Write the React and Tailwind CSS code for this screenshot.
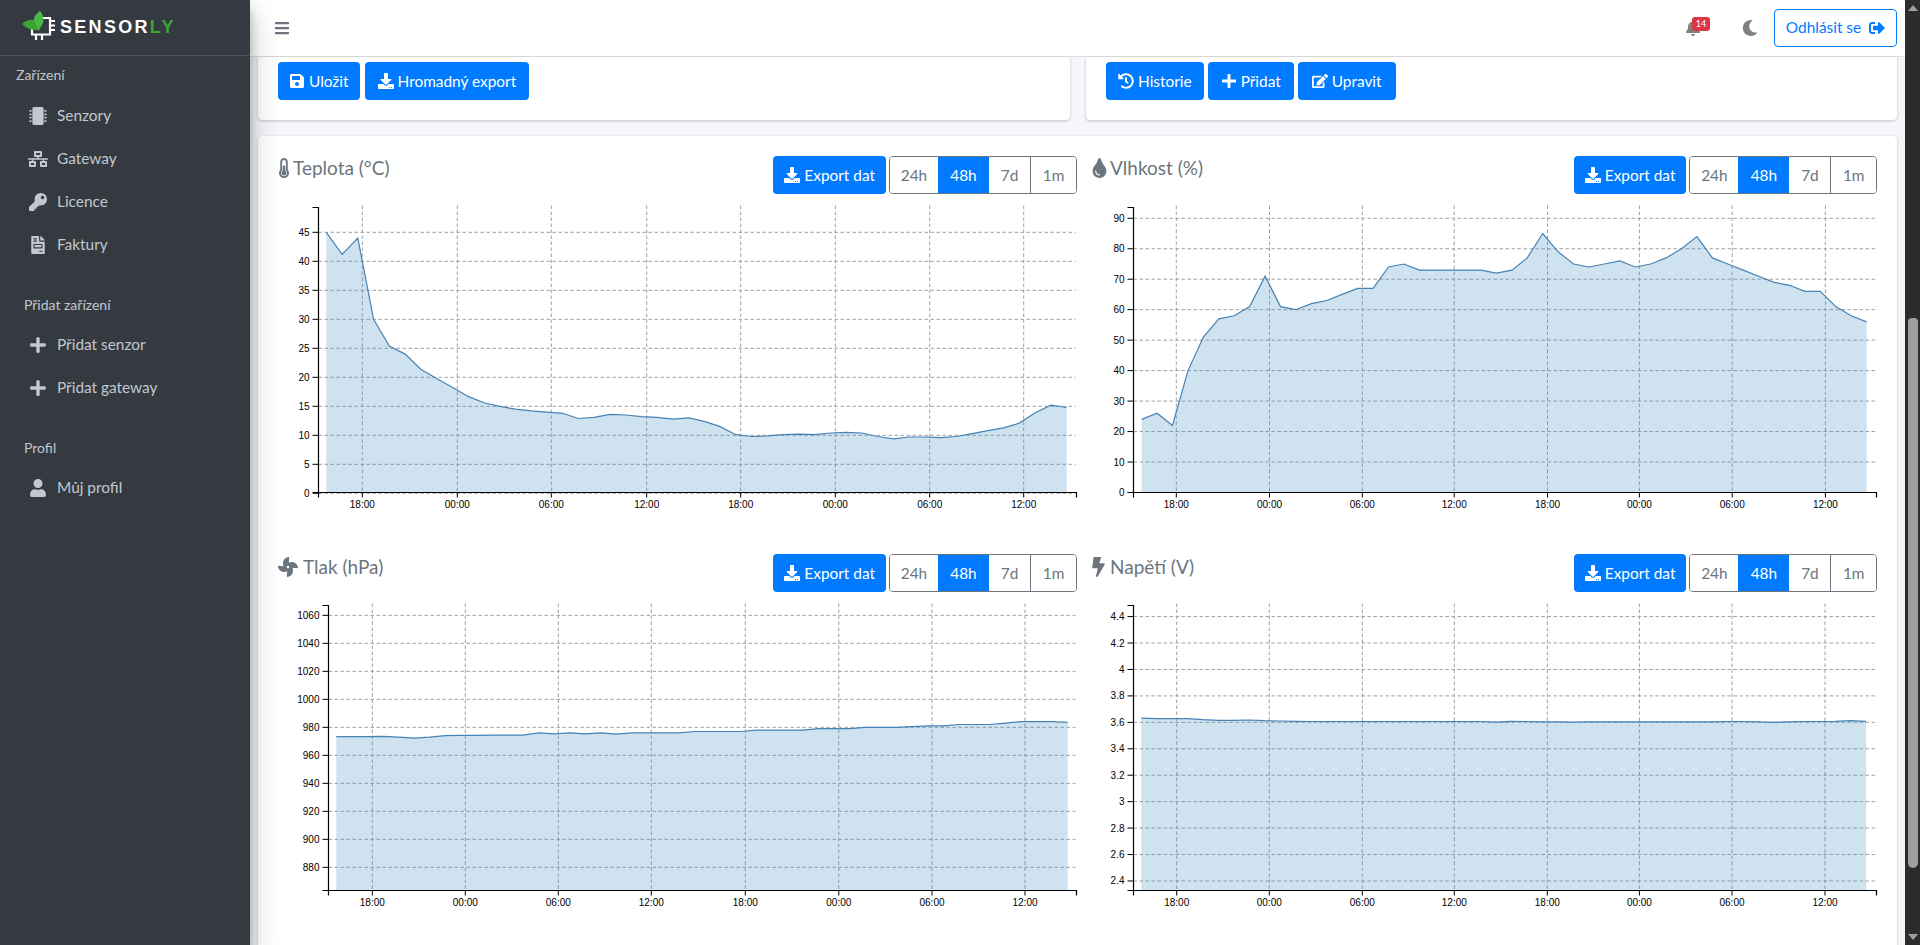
import React from "react";
import {
  FaMicrochip, FaNetworkWired, FaKey, FaFileInvoice, FaPlus, FaUser, FaSave, FaDownload,
  FaHistory, FaEdit, FaBell, FaMoon, FaSignOutAlt, FaBars, FaThermometerHalf, FaTint, FaFan, FaBolt,
} from "react-icons/fa";

const uiFont = "font-['Lato','Noto_Sans',sans-serif]";

const teplota = [45,41.2,44,30,25.4,24,21.4,19.8,18.3,16.7,15.6,15,14.5,14.2,14,13.8,12.9,13.1,13.6,13.5,13.2,13.1,12.8,13,12.4,11.5,10.1,9.8,9.9,10.1,10.2,10.1,10.4,10.5,10.4,9.8,9.4,9.7,9.7,9.6,9.8,10.3,10.8,11.3,12.1,13.9,15.2,14.8];
const vlhkost = [24,26,22,40,51,57,58,61,71,61,60,62,63,65,67,67,74,75,73,73,73,73,73,72,73,77,85,79,75,74,75,76,74,75,77,80,84,77,75,73,71,69,68,66,66,61,58,56];
const tlak = [973.3,973.3,973.3,973.5,973,972.3,973,974,974.3,974.3,974.4,974.4,974.4,976,975.3,976,975.3,976,975.2,976,976,976,976,977,977,977,977,978,978,978,978,979,979,979,980,980,980,980.5,981,981,982,982,982,983,984,984,984,983.5];
const napeti = [3.632,3.628,3.628,3.628,3.62,3.615,3.615,3.618,3.612,3.61,3.608,3.606,3.606,3.606,3.606,3.606,3.606,3.606,3.606,3.606,3.606,3.606,3.606,3.602,3.608,3.606,3.604,3.603,3.602,3.604,3.604,3.604,3.604,3.604,3.604,3.604,3.604,3.604,3.606,3.606,3.604,3.6,3.604,3.606,3.606,3.608,3.612,3.608];

const xLabels = ["18:00", "00:00", "06:00", "12:00", "18:00", "00:00", "06:00", "12:00"];

function ticks(list) {
  return list.map((v) => ({ label: String(v), v }));
}

function Chart({ cellW, axisX, endX, xTicks, start, end, yTicks, yOf, data }) {
  const top = 9.5;
  const bottom = 294.5;
  const step = (end - start) / (data.length - 1);
  const pts = data.map((v, i) => `${(start + i * step).toFixed(1)},${yOf(v).toFixed(1)}`);
  const line = pts.join(" ");
  const area = `${start},${bottom} ${line} ${end},${bottom}`;
  return (
    <svg width={cellW} height={320} viewBox={`0 0 ${cellW} 320`} className="block mt-1 overflow-visible">
      {yTicks.map((t) => (
        <line key={t.label} x1={axisX} x2={endX - 1} y1={yOf(t.v)} y2={yOf(t.v)} stroke="#9f9f9f" strokeWidth="1" strokeDasharray="3.5 2.5" />
      ))}
      {xTicks.map((x, i) => (
        <line key={i} x1={x} x2={x} y1={top - 2} y2={bottom} stroke="#9f9f9f" strokeWidth="1" strokeDasharray="3.5 2.5" />
      ))}
      <polygon points={area} fill="#3f8bc3" fillOpacity="0.25" />
      <polyline points={line} fill="none" stroke="#4682b4" strokeWidth="1.2" />
      <path d={`M${axisX - 6},${top} H${axisX} V${bottom} H${axisX - 6}`} fill="none" stroke="#000" strokeWidth="1.2" />
      <path d={`M${axisX},${bottom + 5} V${bottom} H${endX} V${bottom + 5}`} fill="none" stroke="#000" strokeWidth="1.2" />
      {yTicks.map((t) => (
        <g key={t.label}>
          <line x1={axisX - 6} x2={axisX} y1={yOf(t.v)} y2={yOf(t.v)} stroke="#000" strokeWidth="1" />
          <text x={axisX - 9} y={yOf(t.v) + 3.5} textAnchor="end" fontSize="10" fill="#000" fontFamily="'Liberation Sans', sans-serif">{t.label}</text>
        </g>
      ))}
      {xTicks.map((x, i) => (
        <g key={i}>
          <line x1={x} x2={x} y1={bottom} y2={bottom + 5} stroke="#000" strokeWidth="1" />
          <text x={x} y={bottom + 15} textAnchor="middle" fontSize="10" fill="#000" fontFamily="'Liberation Sans', sans-serif">{xLabels[i]}</text>
        </g>
      ))}
    </svg>
  );
}

function Btn({ icon: Icon, children, pad = "px-[11px]" }) {
  return (
    <button className={`flex items-center gap-1 h-[38px] ${pad} rounded-[4px] bg-[#007bff] text-white text-[15.4px] whitespace-nowrap`}>
      <Icon className="text-[16px] shrink-0" />
      <span className="pt-[1px]">{children}</span>
    </button>
  );
}

function RangeGroup({ widths }) {
  const labels = ["24h", "48h", "7d", "1m"];
  return (
    <div className="flex h-[38px] rounded-[4px] border border-[#6c757d] overflow-hidden">
      {labels.map((l, i) => (
        <div
          key={l}
          style={{ width: widths[i] }}
          className={`flex items-center justify-center pt-[1px] text-[15.4px] ${l === "48h" ? "bg-[#007bff] text-white" : "bg-white text-[#6c757d]"} ${l === "1m" ? "border-l border-[#6c757d]" : ""}`}
        >
          {l}
        </div>
      ))}
    </div>
  );
}

function ChartCell({ icon: Icon, iconClass, title, cellW, group, chart, titlePad = "" }) {
  return (
    <div className="h-[398px]">
      <div className="flex justify-between items-start h-[38px]">
        <h4 className={`flex items-center text-[19px] leading-6 text-[#6c757d] ${titlePad}`}>
          <Icon className={iconClass} />
          <span>{title}</span>
        </h4>
        <div className="flex gap-[3px]">
          <Btn icon={FaDownload} pad="px-[11px]">Export dat</Btn>
          <RangeGroup widths={group} />
        </div>
      </div>
      <Chart cellW={cellW} {...chart} />
    </div>
  );
}

function NavHead({ children, className = "" }) {
  return <div className={`text-[14px] leading-5 text-[#c2c7d0] ${className}`}>{children}</div>;
}

function NavItem({ icon: Icon, size = 18, children }) {
  return (
    <div className="flex items-center h-[43px] pl-[28px] text-[15.4px] text-[#c2c7d0]">
      <span className="w-[20px] flex justify-center"><Icon style={{ fontSize: size }} /></span>
      <span className="ml-[9px]">{children}</span>
    </div>
  );
}

function Logo() {
  return (
    <div className="flex items-center h-[56px] border-b border-[#4b545c] pl-[21px]">
      <svg width="36" height="34" viewBox="0 0 36 34" className="shrink-0">
        <g fill="none" stroke="#fff" strokeWidth="2.2">
          <path d="M11 12v11.5h18V7H22" />
          <path d="M29 10h5M29 14.5h5M29 19h5" />
          <path d="M15 24v5M21 24v5" />
        </g>
        <path d="M1 13c5-5 11-5 15-3 3 2 4 6 3 9-7 1-13-1-18-6z" fill="#3aa535" />
        <path d="M13 9c0-4 3-7 6-9 3 3 4 8 3 12-1 3-3 5-5 6-1-3-3-6-4-9z" fill="#4cb848" />
      </svg>
      <span className="ml-[3px] text-[18px] font-bold tracking-[2.3px] text-white font-['Liberation_Sans',sans-serif]">
        SENSOR<span className="text-[#3aa535]">LY</span>
      </span>
    </div>
  );
}

export default function App() {
  const y1 = (v) => 295.3 - v * 5.8;
  const y2 = (v) => 294.5 - (v / 10) * 30.47;
  const y3 = (v) => (982 / 3 + 540 - 596) - (v - 880) * 1.4;
  const y4 = (v) => (547 / 3 + 540 - 596) - (v - 3.6) * 132.2;

  return (
    <div className={`flex h-[945px] overflow-hidden bg-[#f4f6f9] ${uiFont}`}>
      <aside className="relative z-10 w-[250px] shrink-0 bg-[#343a40] shadow-[0_14px_28px_rgba(0,0,0,0.25),0_10px_10px_rgba(0,0,0,0.22)]">
        <Logo />
        <div className="pt-[9px]">
          <NavHead className="pl-4">Zařízení</NavHead>
          <div className="mt-[9px]">
            <NavItem icon={FaMicrochip}>Senzory</NavItem>
            <NavItem icon={FaNetworkWired} size={20}>Gateway</NavItem>
            <NavItem icon={FaKey}>Licence</NavItem>
            <NavItem icon={FaFileInvoice}>Faktury</NavItem>
          </div>
          <NavHead className="pl-6 mt-[29px]">Přidat zařízení</NavHead>
          <div className="mt-[8px]">
            <NavItem icon={FaPlus}>Přidat senzor</NavItem>
            <NavItem icon={FaPlus}>Přidat gateway</NavItem>
          </div>
          <NavHead className="pl-6 mt-[29px]">Profil</NavHead>
          <div className="mt-[8px]">
            <NavItem icon={FaUser}>Můj profil</NavItem>
          </div>
        </div>
      </aside>

      <div className="flex-1 min-w-0 flex flex-col">
        <header className="h-[57px] shrink-0 bg-white border-b border-[#dee2e6] flex items-center pl-[24px] pr-[8px]">
          <FaBars className="text-[16px] text-[#6c757d]" />
          <div className="ml-auto flex items-center">
            <div className="relative mr-[41px]">
              <FaBell className="text-[16px] text-[#808080]" />
              <span className="absolute -top-[3px] left-[7px] h-[14px] w-[18px] rounded-[3px] bg-[#dc3545] text-white text-[9px] leading-[14px] text-center">14</span>
            </div>
            <FaMoon className="text-[16px] text-[#808080] mr-[16px]" />
            <button className="flex items-center gap-2 h-[38px] w-[123px] justify-center rounded-[4px] border border-[#007bff] text-[#007bff] text-[15.4px] bg-white">
              <span>Odhlásit se</span>
              <FaSignOutAlt className="text-[16px]" />
            </button>
          </div>
        </header>

        <main className="flex-1 min-h-0 px-2">
          <div className="grid grid-cols-[812px_811px] gap-[16px]">
            <section className="h-[63px] bg-white rounded-b-[4px] shadow-[0_0_1px_rgba(0,0,0,0.125),0_1px_3px_rgba(0,0,0,0.2)] pt-[5px] pl-[20px] flex gap-[5px]">
              <Btn icon={FaSave}>Uložit</Btn>
              <Btn icon={FaDownload} pad="px-[13px]">Hromadný export</Btn>
            </section>
            <section className="h-[63px] bg-white rounded-b-[4px] shadow-[0_0_1px_rgba(0,0,0,0.125),0_1px_3px_rgba(0,0,0,0.2)] pt-[5px] pl-[20px] flex gap-[4px]">
              <Btn icon={FaHistory} pad="px-[12px]">Historie</Btn>
              <Btn icon={FaPlus} pad="px-[13px]">Přidat</Btn>
              <Btn icon={FaEdit} pad="px-[14px]">Upravit</Btn>
            </section>
          </div>
          <section className="mt-[16px] h-[820px] bg-white rounded-[4px] shadow-[0_0_1px_rgba(0,0,0,0.125),0_1px_3px_rgba(0,0,0,0.2)] pt-[20px] pl-[20px]">
            <div className="grid grid-cols-[799px_785px] gap-x-[15px]">
              <ChartCell
                icon={FaThermometerHalf}
                iconClass="text-[20px] w-[12px] mr-[3px]"
                title="Teplota (°C)"
                cellW={799}
                group={[48, 51, 41, 46]}
                chart={{
                  axisX: 40.5, endX: 798.5,
                  xTicks: [84.3, 179.3, 273.3, 368.7, 462.7, 557.3, 651.7, 745.7],
                  start: 48.3, end: 788.7,
                  yTicks: ticks([0,5,10,15,20,25,30,35,40,45]),
                  yOf: y1, data: teplota,
                }}
              />
              <ChartCell
                icon={FaTint}
                iconClass="text-[20px] w-[15px] mr-[3px]"
                title="Vlhkost (%)"
                cellW={785}
                group={[48, 51, 41, 45.6]}
                chart={{
                  axisX: 41.5, endX: 784.5,
                  xTicks: [84.3, 177.5, 270.3, 362.2, 455.5, 547.4, 640.2, 733.4],
                  start: 49.7, end: 774.6,
                  yTicks: ticks([0,10,20,30,40,50,60,70,80,90]),
                  yOf: y2, data: vlhkost,
                }}
              />
              <ChartCell
                icon={FaFan}
                iconClass="text-[20px] w-[20px] mr-[5px]"
                title="Tlak (hPa)"
                titlePad="pt-[1px]"
                cellW={799}
                group={[48, 51, 41, 46]}
                chart={{
                  axisX: 50.5, endX: 798.5,
                  xTicks: [94.3, 187.3, 280.3, 373.3, 467.3, 560.8, 654, 747],
                  start: 58.3, end: 789.7,
                  yTicks: ticks([1060,1040,1020,1000,980,960,940,920,900,880]),
                  yOf: y3, data: tlak,
                }}
              />
              <ChartCell
                icon={FaBolt}
                iconClass="text-[20px] w-[13px] mr-[5px]"
                title="Napětí (V)"
                titlePad="pt-[1px]"
                cellW={785}
                group={[48, 51, 41, 45.6]}
                chart={{
                  axisX: 41.5, endX: 784.5,
                  xTicks: [84.7, 177.3, 270.3, 362.3, 455.3, 547.4, 640, 733],
                  start: 49.3, end: 774,
                  yTicks: [
                    { label: "4.4", v: 4.4 }, { label: "4.2", v: 4.2 }, { label: "4", v: 4 },
                    { label: "3.8", v: 3.8 }, { label: "3.6", v: 3.6 }, { label: "3.4", v: 3.4 },
                    { label: "3.2", v: 3.2 }, { label: "3", v: 3 }, { label: "2.8", v: 2.8 },
                    { label: "2.6", v: 2.6 }, { label: "2.4", v: 2.4 },
                  ],
                  yOf: y4, data: napeti,
                }}
              />
            </div>
          </section>
        </main>
      </div>

      <div className="w-[15px] shrink-0 bg-[#2c2c2c] flex flex-col items-center">
        <div className="mt-[5px] w-0 h-0 border-l-[5px] border-r-[5px] border-b-[6px] border-l-transparent border-r-transparent border-b-[#9f9f9f]" />
        <div className="mt-[307px] w-[10px] flex-1 rounded-b-[5px] rounded-t-[4px] bg-[#9f9f9f]" />
        <div className="mt-[66px] mb-[5px] w-0 h-0 border-l-[5px] border-r-[5px] border-t-[6px] border-l-transparent border-r-transparent border-t-[#9f9f9f]" />
      </div>
    </div>
  );
}
